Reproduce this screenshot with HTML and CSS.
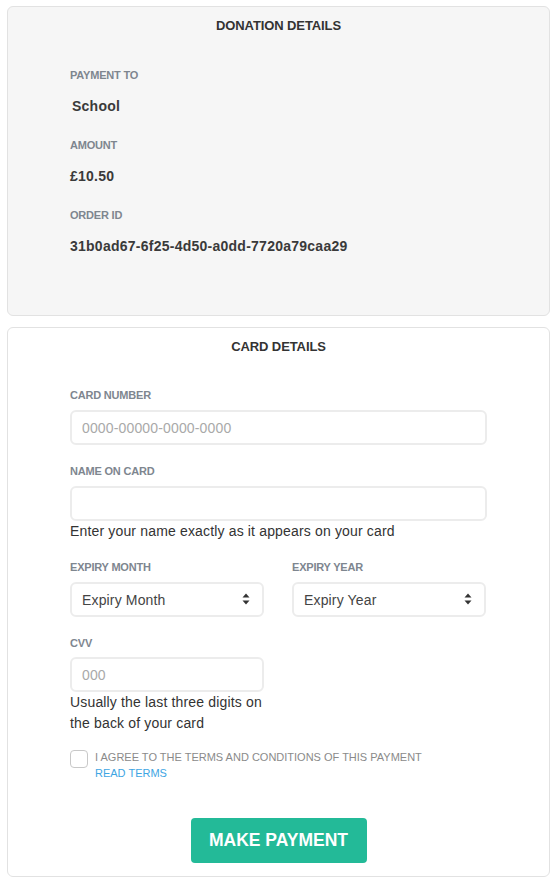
FILE: index.html
```html
<!DOCTYPE html>
<html lang="en">
<head>
<meta charset="utf-8">
<title>Donation</title>
<link rel="stylesheet" href="styles.css">
</head>
<body>
<div class="page">
  <section class="panel panel-grey">
    <h2 class="panel-title">DONATION DETAILS</h2>
    <div class="panel-body">
      <div class="detail">
        <div class="label">PAYMENT TO</div>
        <div class="value value-indent">School</div>
      </div>
      <div class="detail">
        <div class="label">AMOUNT</div>
        <div class="value">£10.50</div>
      </div>
      <div class="detail">
        <div class="label">ORDER ID</div>
        <div class="value">31b0ad67-6f25-4d50-a0dd-7720a79caa29</div>
      </div>
    </div>
  </section>

  <section class="panel panel-white">
    <h2 class="panel-title">CARD DETAILS</h2>
    <form class="panel-body form">
      <div class="field">
        <label class="label" for="card">CARD NUMBER</label>
        <input class="input" id="card" type="text" placeholder="0000-00000-0000-0000">
      </div>
      <div class="field">
        <label class="label" for="name">NAME ON CARD</label>
        <input class="input" id="name" type="text">
        <div class="help">Enter your name exactly as it appears on your card</div>
      </div>
      <div class="row row-expiry">
        <div class="field">
          <label class="label" for="month">EXPIRY MONTH</label>
          <div class="select-wrap">
            <select class="input select" id="month"><option>Expiry Month</option></select>
            <svg class="sort" width="8" height="12" viewBox="0 0 8 12"><path d="M4 0.5 L7.5 4.5 H0.5 Z M4 11.5 L7.5 7.5 H0.5 Z" fill="#333"/></svg>
          </div>
        </div>
        <div class="field">
          <label class="label" for="year">EXPIRY YEAR</label>
          <div class="select-wrap">
            <select class="input select" id="year"><option>Expiry Year</option></select>
            <svg class="sort" width="8" height="12" viewBox="0 0 8 12"><path d="M4 0.5 L7.5 4.5 H0.5 Z M4 11.5 L7.5 7.5 H0.5 Z" fill="#333"/></svg>
          </div>
        </div>
      </div>
      <div class="row">
        <div class="field">
          <label class="label label-cvv" for="cvv">CVV</label>
          <input class="input" id="cvv" type="text" placeholder="000">
          <div class="help help-tall">Usually the last three digits on the back of your card</div>
        </div>
      </div>
      <div class="agree">
        <span class="checkbox"></span>
        <div class="agree-text">
          <div>I AGREE TO THE TERMS AND CONDITIONS OF THIS PAYMENT</div>
          <a class="terms-link" href="#">READ TERMS</a>
        </div>
      </div>
      <div class="actions">
        <button type="button" class="btn">MAKE PAYMENT</button>
      </div>
    </form>
  </section>
</div>
</body>
</html>
```

FILE: styles.css
```css
* { box-sizing: border-box; }
html, body { margin: 0; padding: 0; background: #fff; }
body {
  font-family: "Liberation Sans", Arial, sans-serif;
  color: #333;
}
.page {
  padding: 6px 6px 0 7px;
  display: flex;
  flex-direction: column;
  gap: 11px;
}
.panel {
  border: 1px solid #e2e2e2;
  border-radius: 6px;
}
.panel-grey { background: #f6f6f6; height: 310px; }
.panel-white { background: #fff; height: 550px; }
.panel-title {
  margin: 0;
  padding-top: 9px;
  font-size: 13px;
  line-height: 20px;
  font-weight: bold;
  text-align: center;
  color: #333;
  letter-spacing: -0.1px;
}
.panel-body {
  padding: 0 62px;
}
.panel-grey .panel-body { padding-top: 31px; }
.detail { display: flex; flex-direction: column; margin-bottom: 21px; }
.label {
  display: block;
  font-size: 11px;
  line-height: 16px;
  font-weight: bold;
  color: #7e868f;
  letter-spacing: -0.2px;
}
.detail .label { margin-bottom: 13px; }
.value {
  font-size: 14px;
  line-height: 20px;
  font-weight: bold;
  color: #3a3a3a;
  letter-spacing: 0.25px;
}
.value-indent { padding-left: 2px; }

.form { padding-top: 30px; display: flex; flex-direction: column; }
.field { display: flex; flex-direction: column; margin-bottom: 18px; }
.field .label { margin-bottom: 7px; }
.field .label-cvv { margin-bottom: 6px; }
.input {
  width: 100%;
  height: 35px;
  border: 2px solid #ececec;
  border-radius: 6px;
  background: #fff;
  padding: 0 10px;
  font-family: "Liberation Sans", Arial, sans-serif;
  font-size: 14px;
  color: #444;
  outline: none;
  letter-spacing: 0.15px;
}
.input::placeholder { color: #a9a9a9; }
.help {
  font-size: 14px;
  line-height: 20px;
  color: #333;
  letter-spacing: 0.16px;
}
.help-tall { line-height: 21px; }
.row {
  display: grid;
  grid-template-columns: 194px 194px;
  column-gap: 28px;
}
.row .field { margin-bottom: 16px; }
.row-expiry .field { margin-bottom: 18px; }
.select-wrap { position: relative; }
.select {
  appearance: none;
  -webkit-appearance: none;
  padding-right: 28px;
}
.sort {
  position: absolute;
  right: 14px;
  top: 11px;
  pointer-events: none;
}
.agree {
  display: flex;
  align-items: flex-start;
  gap: 7px;
}
.checkbox {
  width: 18px;
  height: 18px;
  border: 1px solid #c8c8c8;
  border-radius: 4px;
  background: #fff;
  flex: none;
}
.agree-text {
  font-size: 11px;
  line-height: 16px;
  color: #8a8a8a;
  margin-top: -1px;
}
.terms-link {
  color: #3ea5e3;
  text-decoration: none;
}
.actions {
  display: flex;
  justify-content: center;
  margin-top: 37px;
}
.btn {
  width: 176px;
  height: 45px;
  border: none;
  border-radius: 4px;
  background: #23ba98;
  color: #fff;
  font-family: "Liberation Sans", Arial, sans-serif;
  font-size: 17.5px;
  font-weight: bold;
  cursor: pointer;
}
```
